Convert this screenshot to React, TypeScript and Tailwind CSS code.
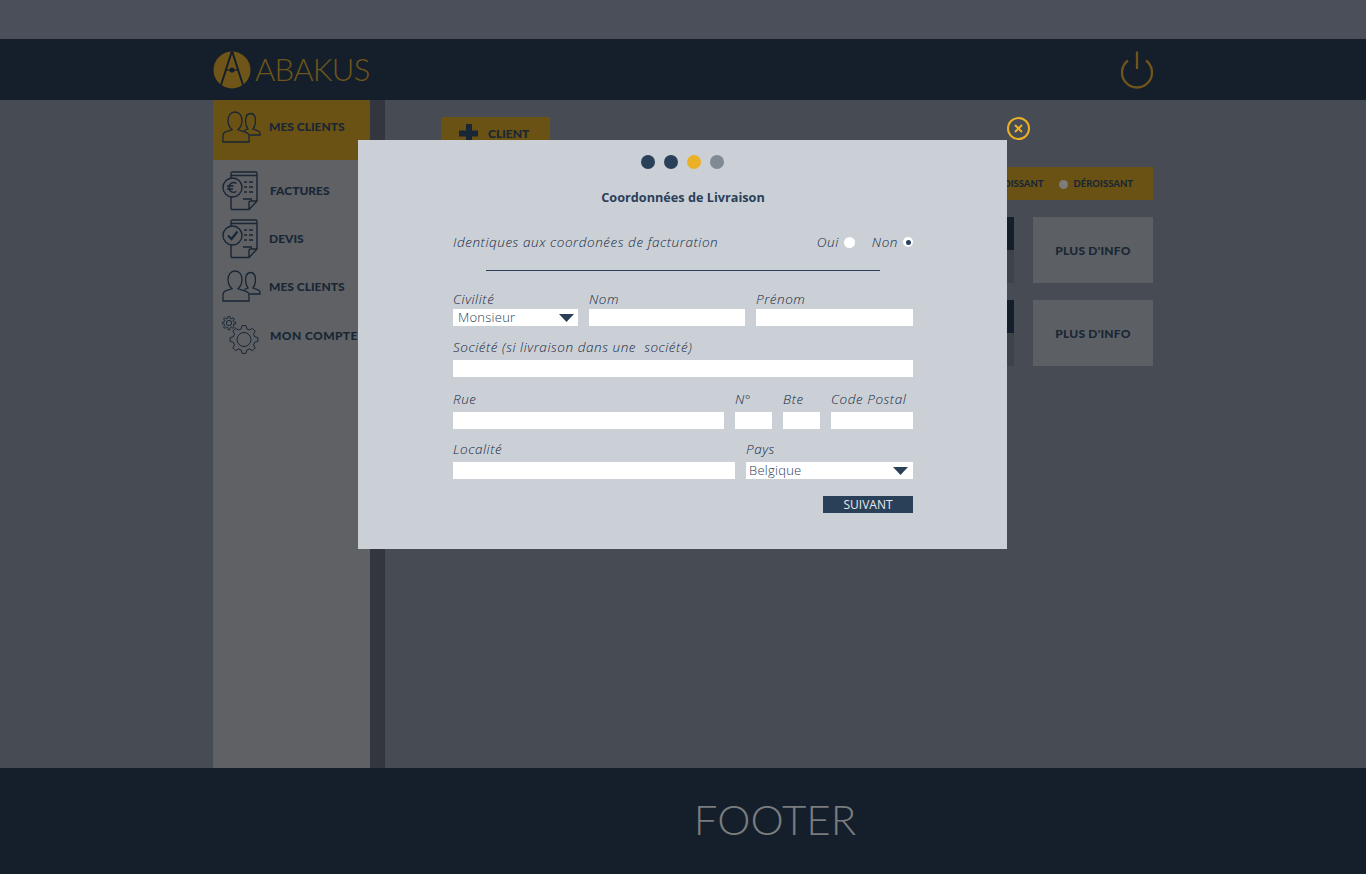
import React from "react";

const font = { fontFamily: '"Lato", "Open Sans", sans-serif' };
const formFont = { fontFamily: '"Open Sans", "Lato", sans-serif' };

function People() {
  return (
    <svg width="40" height="32" viewBox="0 0 40 32" fill="none" stroke="#192635" strokeWidth="1.3" className="block">
      <path d="M1 31V24.500C1 22 2.500 21 5 20.300L10 18.800C7.500 16.500 6 13 6 9.500C6 4.500 8.800 1 13 1C17.200 1 20 4.500 20 9.500C20 13 18.500 16.500 16 18.800L21 20.300C24 21 27 22 27 24.500V31Z" />
      <path d="M22 19.500L26 18C24.300 15.800 23.500 13 23.500 10C23.500 5.500 25.500 2.500 28.500 2.500C31.500 2.500 33.500 5.500 33.500 10C33.500 13 32.700 15.800 31 18L36 19.800C37.500 20.300 38 21 38 22.500V24H27.500" />
    </svg>
  );
}

function Doc({ children }: { children: React.ReactNode }) {
  return (
    <svg width="36" height="40" viewBox="0 0 36 40" fill="none" stroke="#192635" strokeWidth="1.4" className="block">
      <path d="M9 8V2.500C9 1.500 9.500 1 10.500 1H34C34.800 1 35 1.500 35 2.500V30L27 38.500H10C9.300 38.500 9 38 9 37V26" />
      <path d="M9 4.500H35M27 38.500V31.500C27 30.500 27.500 30 28.500 30H35" />
      <path d="M22 11H25M27 11H31M22 16H25M27 16H31M22 21H25M27 21H31M21 28H30" />
      <circle cx="10.500" cy="16.500" r="9.500" />
      {children}
    </svg>
  );
}

function Gears() {
  const teeth = (cx: number, cy: number, r1: number, r2: number, n: number) => {
    const pts: string[] = [];
    for (let i = 0; i < n; i++) {
      const a = (i / n) * Math.PI * 2 - Math.PI / 2;
      const w = Math.PI / n / 2;
      [
        [r1, a - w * 1.3],
        [r2, a - w * 0.7],
        [r2, a + w * 0.7],
        [r1, a + w * 1.3],
      ].forEach(([r, t]) => pts.push(`${(cx + r * Math.cos(t)).toFixed(1)},${(cy + r * Math.sin(t)).toFixed(1)}`));
    }
    return pts.join(" ");
  };
  return (
    <svg width="38" height="38" viewBox="0 0 38 38" fill="none" stroke="#192635" strokeWidth="1" className="block">
      <polygon points={teeth(7, 7, 4.800, 6.800, 8)} />
      <circle cx="7" cy="7" r="2.600" />
      <polygon points={teeth(22, 23.500, 11, 14, 8)} />
      <circle cx="22" cy="23.500" r="7" />
    </svg>
  );
}

function NavItem({ icon, label, labelClass, className }: { icon: React.ReactNode; label: string; labelClass: string; className: string }) {
  return (
    <div className={`flex items-center ${className}`}>
      <div className="w-[56px] shrink-0 pl-[9px]">{icon}</div>
      <span className={`text-[12px] font-black text-[#192635] whitespace-nowrap ${labelClass}`}>{label}</span>
    </div>
  );
}

function Caret() {
  return (
    <svg width="15" height="8" viewBox="0 0 15 8" className="block shrink-0">
      <path d="M0 0H15L7.500 8Z" fill="#2a4059" />
    </svg>
  );
}

function Field({ label, className }: { label: string; className: string }) {
  return (
    <div className={`flex flex-col ${className}`}>
      <span className="mb-[4px] text-[13.500px] font-[350] italic leading-[17px] tracking-[0.55px] text-[#16293f] whitespace-pre">{label}</span>
      <div className="h-[17px] bg-white" />
    </div>
  );
}

function SelectField({ label, value, className, boxClass }: { label: string; value: string; className: string; boxClass: string }) {
  return (
    <div className={`flex flex-col ${className}`}>
      <span className="mb-[4px] text-[13.500px] font-[350] italic leading-[17px] tracking-[0.55px] text-[#16293f]">{label}</span>
      <div className={`flex h-[17px] items-center justify-between bg-white ${boxClass}`}>
        <span className="text-[13px] font-[350] leading-[17px] tracking-[0.25px] text-[#2a4059]">{value}</span>
        <Caret />
      </div>
    </div>
  );
}

function Row() {
  return (
    <div className="flex h-[66px]">
      <div className="flex flex-1 flex-col">
        <div className="h-[33px] bg-[#141f2b]" />
        <div className="flex-1 bg-[#3e4249]" />
      </div>
      <div className="ml-[19px] flex w-[120px] items-center justify-center bg-[#5c6064] pt-[1px] text-[12px] font-black tracking-[0.2px] text-[#192635]">
        PLUS D'INFO
      </div>
    </div>
  );
}

export default function App() {
  return (
    <div className="relative flex h-[874px] w-[1366px] flex-col overflow-hidden bg-[#474b54]" style={font}>
      <div className="h-[39px] shrink-0 bg-[#4a4f59]" />
      <header className="flex h-[61px] shrink-0 items-center justify-between bg-[#141f2b] pl-[213px] pr-[212px]">
        <div className="flex items-center">
          <svg width="38" height="38" viewBox="0 0 38 38" className="block">
            <circle cx="19" cy="19" r="18.500" fill="#6f5618" />
            <path d="M19 0L8 34M19 0L30 34" stroke="#141f2b" strokeWidth="2" fill="none" />
            <path d="M12 19H26" stroke="#141f2b" strokeWidth="1.300" />
            <circle cx="19" cy="19" r="2.600" fill="#141f2b" />
          </svg>
          <span className="ml-[4px] text-[31px] font-light leading-none tracking-[-0.7px] text-[#6f5618]">ABAKUS</span>
        </div>
        <svg width="34" height="38" viewBox="0 0 34 38" fill="none" stroke="#6f5618" strokeWidth="2.300" className="block">
          <path d="M8 9.500A15 15 0 1 0 26 9.500" />
          <path d="M17 0.500V18" />
        </svg>
      </header>

      <div className="flex min-h-0 flex-1">
        <div className="w-[213px] shrink-0" />
        <aside className="flex w-[157px] shrink-0 flex-col bg-[#5f6165]">
          <NavItem icon={<People />} label="MES CLIENTS" labelClass="" className="h-[60px] bg-[#6a5114] pb-[6px]" />
          <div className="flex flex-col pt-[10px]">
            <NavItem
              icon={
                <Doc>
                  <path d="M14.500 12.500C12 10.500 8 11.500 7 15.500C6.500 19.500 10 23 14.500 20.500M5 15H11.500M5 18H11" />
                </Doc>
              }
              label="FACTURES"
              labelClass="ml-[1px]"
              className="h-[42px]"
            />
            <NavItem
              icon={
                <Doc>
                  <path d="M6 16.500L9.500 20L15.500 12.500" strokeWidth="2.200" />
                </Doc>
              }
              label="DEVIS"
              labelClass=""
              className="mt-[6px] h-[42px]"
            />
            <NavItem icon={<People />} label="MES CLIENTS" labelClass="mt-[2px]" className="mt-[5px] h-[42px]" />
            <NavItem icon={<Gears />} label="MON COMPTE" labelClass="ml-[1px] mt-[2px] tracking-[0.4px]" className="mt-[7px] h-[42px]" />
          </div>
        </aside>
        <div className="w-[15px] shrink-0 bg-[#33363e]" />
        <main className="flex min-w-0 flex-1 flex-col pl-[56px] pr-[213px] pt-[17px]">
          <div className="flex h-[33px] w-[109px] items-center bg-[#6a5114] pl-[18px]">
            <svg width="19" height="19" viewBox="0 0 19 19" fill="#192635" className="block shrink-0">
              <path d="M7 0H13V6.500H19V12.500H13V19H7V12.500H0V6.500H7Z" />
            </svg>
            <span className="ml-[10px] text-[12px] font-black text-[#192635]">CLIENT</span>
          </div>
          <div className="mt-[17px] flex h-[33px] items-center justify-end bg-[#6a5114] pr-[20px] pt-[1px]">
            <span className="mr-[15px] text-[9.500px] font-black text-[#192635]">CROISSANT</span>
            <span className="mr-[6px] h-[9px] w-[9px] rounded-full bg-[#7b7c7c]" />
            <span className="text-[9.500px] font-black text-[#192635]">DÉROISSANT</span>
          </div>
          <div className="mt-[17px] flex flex-col gap-[17px]">
            <Row />
            <Row />
          </div>
        </main>
      </div>

      <footer className="flex h-[106px] shrink-0 items-center justify-center bg-[#141f2b] pb-[4px] pl-[184px]">
        <span className="text-[42px] font-light leading-none text-[#7a7c7e]">FOOTER</span>
      </footer>

      <div className="absolute left-[358px] top-[140px] flex h-[409px] w-[649px] flex-col bg-[#cbd0d7] pl-[95px] pr-[94px]" style={formFont}>
        <div className="mt-[15px] flex justify-center gap-[9px] pr-[1px]">
          <span className="h-[14px] w-[14px] rounded-full bg-[#2a4059]" />
          <span className="h-[14px] w-[14px] rounded-full bg-[#2a4059]" />
          <span className="h-[14px] w-[14px] rounded-full bg-[#eab126]" />
          <span className="h-[14px] w-[14px] rounded-full bg-[#7f8a95]" />
        </div>
        <div className="mt-[19px] text-center text-[12.700px] font-bold leading-[18px] text-[#2a4059]">Coordonnées de Livraison</div>
        <div className="mt-[27px] flex h-[18px] items-center justify-between text-[13.500px] font-[350] italic tracking-[0.55px] text-[#16293f]">
          <span>Identiques aux coordonées de facturation</span>
          <div className="flex items-center">
            <span>Oui</span>
            <span className="ml-[5px] h-[11px] w-[11px] rounded-full bg-white" />
            <span className="ml-[17px]">Non</span>
            <span className="ml-[5px] flex h-[10px] w-[10px] items-center justify-center rounded-full bg-white">
              <span className="h-[5px] w-[5px] rounded-full bg-[#2a4059]" />
            </span>
          </div>
        </div>
        <div className="mx-[33px] mt-[19px] h-px bg-[#2a4059]" />
        <div className="mt-[20px] flex gap-[11px] [&>div>span:first-child]:mb-[1px]">
          <SelectField label="Civilité" value="Monsieur" className="w-[125px]" boxClass="pl-[5px] pr-[4px]" />
          <Field label="Nom" className="w-[156px]" />
          <Field label="Prénom" className="w-[157px]" />
        </div>
        <Field label="Société (si livraison dans une  société)" className="mt-[13px]" />
        <div className="mt-[14px] flex gap-[11px]">
          <Field label="Rue" className="w-[271px]" />
          <Field label="N°" className="w-[37px]" />
          <Field label="Bte" className="w-[37px]" />
          <Field label="Code Postal" className="w-[82px]" />
        </div>
        <div className="mt-[12px] flex gap-[11px]">
          <Field label="Localité" className="w-[282px]" />
          <SelectField label="Pays" value="Belgique" className="flex-1" boxClass="pl-[3px] pr-[5px]" />
        </div>
        <div className="mt-[17px] flex justify-end">
          <div className="flex h-[17px] w-[90px] items-center justify-center bg-[#2a4059] text-[12px] text-[#e6e9ed]">SUIVANT</div>
        </div>
      </div>

      <div className="absolute left-[1007px] top-[117px] flex h-[23px] w-[23px] items-center justify-center rounded-full border-[2px] border-[#eab126]">
        <svg width="9" height="9" viewBox="0 0 9 9" stroke="#eab126" strokeWidth="2" className="block">
          <path d="M1 1L8 8M8 1L1 8" />
        </svg>
      </div>
    </div>
  );
}
